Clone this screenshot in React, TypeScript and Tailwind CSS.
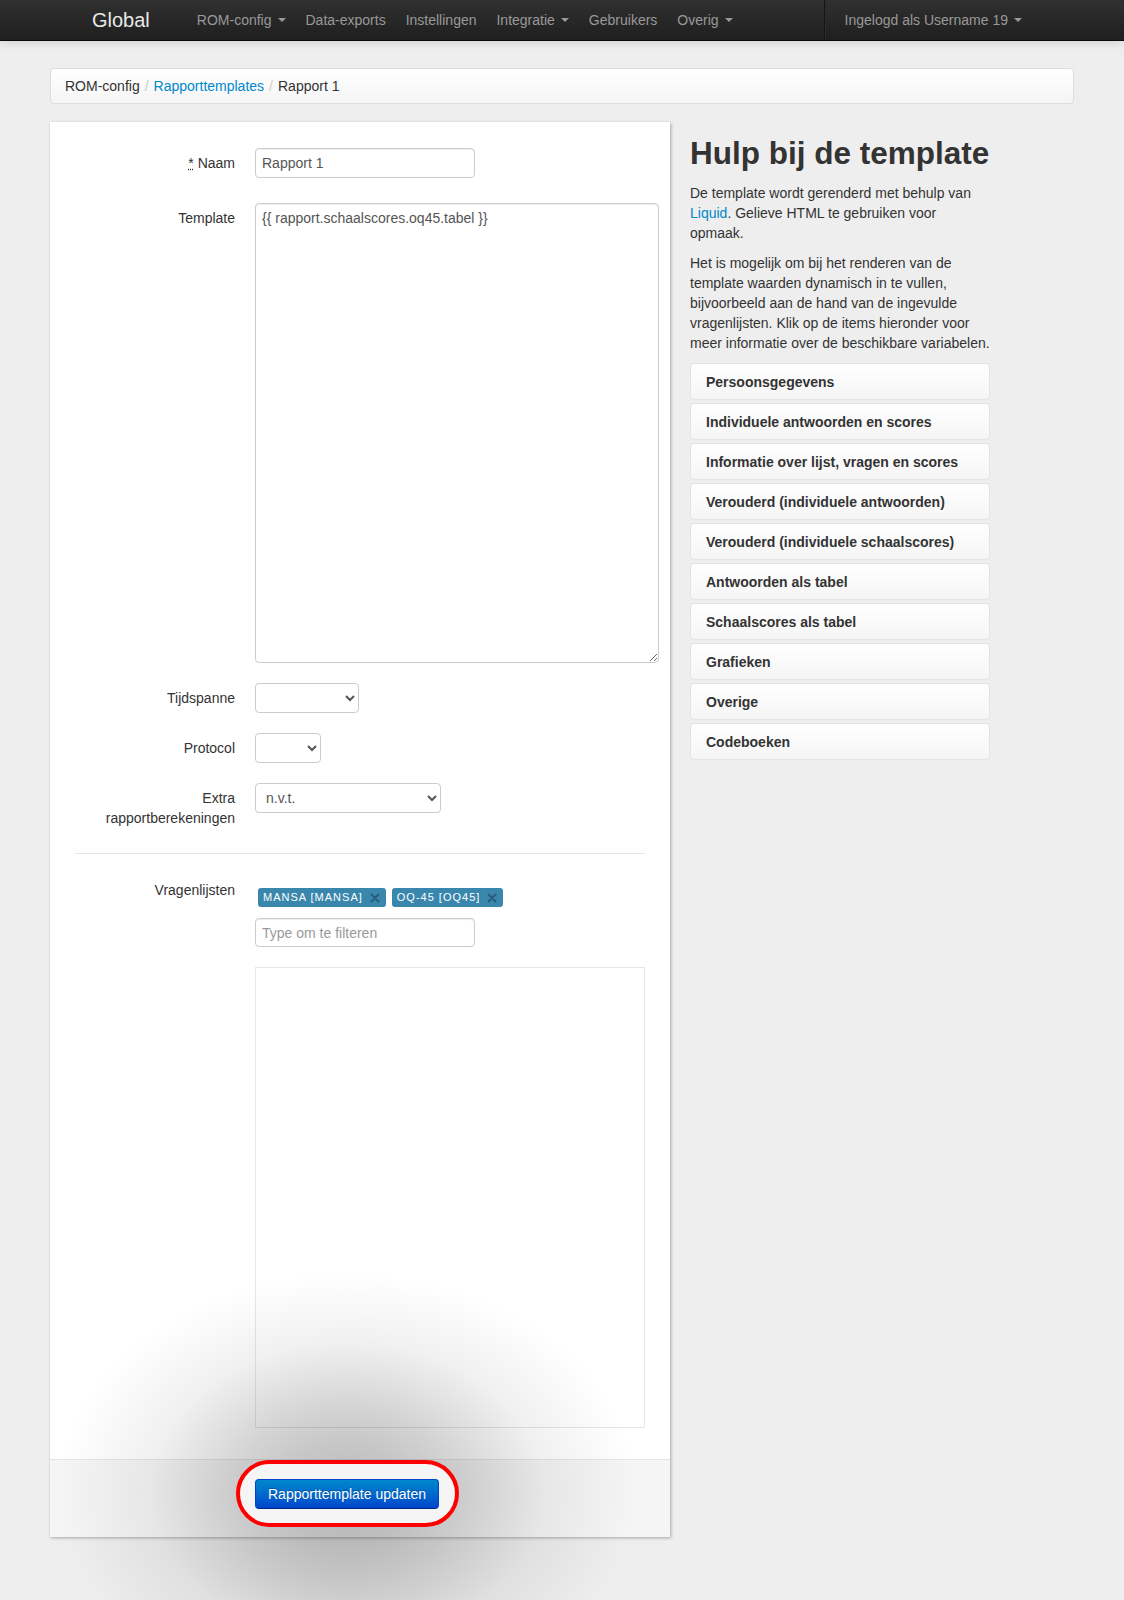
import React from "react";

const Caret = () => (
  <span className="inline-block ml-[6px] w-0 h-0 border-l-[4px] border-r-[4px] border-t-[4px] border-l-transparent border-r-transparent border-t-[#999999] align-middle mb-[2px]" />
);

const navItems: { label: string; caret?: boolean }[] = [
  { label: "ROM-config", caret: true },
  { label: "Data-exports" },
  { label: "Instellingen" },
  { label: "Integratie", caret: true },
  { label: "Gebruikers" },
  { label: "Overig", caret: true },
];

const helpItems = [
  "Persoonsgegevens",
  "Individuele antwoorden en scores",
  "Informatie over lijst, vragen en scores",
  "Verouderd (individuele antwoorden)",
  "Verouderd (individuele schaalscores)",
  "Antwoorden als tabel",
  "Schaalscores als tabel",
  "Grafieken",
  "Overige",
  "Codeboeken",
];

const Tag = ({ text }: { text: string }) => (
  <span className="inline-flex items-center h-[19px] pl-[5px] pr-[6px] rounded-[3px] bg-[#3a87ad] text-white text-[11px] tracking-[1px] leading-[19px]">
    {text}
    <svg className="ml-[7px]" width="10" height="10" viewBox="0 0 10 10">
      <path d="M1.5 1.5 L8.5 8.5 M8.5 1.5 L1.5 8.5" stroke="#285e7a" strokeWidth="2" strokeLinecap="round" />
    </svg>
  </span>
);

export default function App() {
  return (
    <div className="h-[1600px] overflow-hidden bg-[#eeeeee] text-[#333333] text-[14px] leading-[20px] font-['Liberation_Sans',Arial,sans-serif]">
      {/* Navbar */}
      <div className="h-[41px] bg-gradient-to-b from-[#303030] to-[#1f1f1f] border-b border-b-[#0a0a0a] shadow-[0_1px_10px_rgba(0,0,0,0.15)]">
        <div className="flex items-center h-[40px] px-[92px]">
          <span className="text-[20px] text-[#e8e8e8] leading-[20px]">Global</span>
          <div className="flex items-center ml-[37px]">
            {navItems.map((n) => (
              <span key={n.label} className="px-[10px] text-[#999999] whitespace-nowrap">
                {n.label}
                {n.caret && <Caret />}
              </span>
            ))}
          </div>
          <div className="flex items-center ml-auto h-[40px]">
            <div className="h-[40px] border-l border-l-[#151515] border-r border-r-[#2c2c2c] mx-[9px]" />
            <span className="px-[10px] text-[#999999] whitespace-nowrap">
              Ingelogd als Username 19
              <Caret />
            </span>
          </div>
        </div>
      </div>

      <div className="px-[50px]">
        {/* Breadcrumb */}
        <div className="mt-[27px] h-[36px] flex items-center pl-[14px] pr-[15px] border border-[#dddddd] rounded-[4px] bg-gradient-to-b from-white to-[#f5f5f5]">
          <span>ROM-config</span>
          <span className="px-[5px] text-[#cccccc]">/</span>
          <span className="text-[#0088cc]">Rapporttemplates</span>
          <span className="px-[5px] text-[#cccccc]">/</span>
          <span>Rapport 1</span>
        </div>

        <div className="flex items-start mt-[18px]">
          {/* Form panel */}
          <div className="w-[620px] shrink-0 bg-white shadow-[1px_1px_3px_rgba(0,0,0,0.3)]">
            <div className="px-[25px] pt-[26px] pb-[31px]">
              <div className="flex mb-[25px]">
                <label className="w-[160px] shrink-0 text-right pt-[5px]">
                  <abbr className="underline decoration-dotted" title="verplicht">*</abbr> Naam
                </label>
                <div className="ml-[20px]">
                  <input
                    className="block w-[220px] h-[30px] border border-[#cccccc] rounded-[4px] px-[6px] text-[#555555] shadow-[inset_0_1px_1px_rgba(0,0,0,0.075)]"
                    defaultValue="Rapport 1"
                  />
                </div>
              </div>

              <div className="flex mb-[20px]">
                <label className="w-[160px] shrink-0 text-right pt-[5px]">Template</label>
                <div className="ml-[20px]">
                  <textarea
                    className="block w-[404px] h-[460px] border border-[#cccccc] rounded-[4px] px-[6px] py-[4px] text-[#555555] shadow-[inset_0_1px_1px_rgba(0,0,0,0.075)]"
                    defaultValue="{{ rapport.schaalscores.oq45.tabel }}"
                  />
                </div>
              </div>

              <div className="flex mb-[20px]">
                <label className="w-[160px] shrink-0 text-right pt-[5px]">Tijdspanne</label>
                <div className="ml-[20px]">
                  <select className="block w-[104px] h-[30px] border border-[#cccccc] rounded-[4px] bg-white px-[6px] text-[#555555]">
                    <option></option>
                  </select>
                </div>
              </div>

              <div className="flex mb-[20px]">
                <label className="w-[160px] shrink-0 text-right pt-[5px]">Protocol</label>
                <div className="ml-[20px]">
                  <select className="block w-[66px] h-[30px] border border-[#cccccc] rounded-[4px] bg-white px-[6px] text-[#555555]">
                    <option></option>
                  </select>
                </div>
              </div>

              <div className="flex">
                <label className="w-[160px] shrink-0 text-right pt-[5px]">Extra rapportberekeningen</label>
                <div className="ml-[20px]">
                  <select className="block w-[186px] h-[30px] border border-[#cccccc] rounded-[4px] bg-white px-[6px] text-[#555555]">
                    <option>n.v.t.</option>
                  </select>
                </div>
              </div>

              <div className="mt-[25px] border-t border-t-[#e5e5e5] border-b border-b-white" />

              <div className="flex mt-[20px]">
                <label className="w-[160px] shrink-0 text-right pt-[5px]">Vragenlijsten</label>
                <div className="ml-[20px] pt-[13px]">
                  <div className="flex gap-[6px] pl-[3px]">
                    <Tag text="MANSA [MANSA]" />
                    <Tag text="OQ-45 [OQ45]" />
                  </div>
                  <input
                    className="block mt-[11px] w-[220px] h-[29px] border border-[#cccccc] rounded-[4px] px-[6px] text-[#555555] placeholder:text-[#999999] shadow-[inset_0_1px_1px_rgba(0,0,0,0.075)]"
                    placeholder="Type om te filteren"
                  />
                  <div className="mt-[20px] w-[390px] h-[461px] border border-[#e6e6e6] bg-white" />
                </div>
              </div>
            </div>

            {/* Form actions */}
            <div className="relative bg-[#f5f5f5] border-t border-t-[#e5e5e5] pt-[19px] pb-[28px] pl-[205px]">
              <div className="absolute left-[7px] top-[-187px] w-[580px] h-[440px] pointer-events-none bg-[radial-gradient(closest-side,rgba(0,0,0,0.27)_0%,rgba(0,0,0,0.22)_23%,rgba(0,0,0,0.17)_39%,rgba(0,0,0,0.06)_68%,rgba(0,0,0,0)_100%)]" />
              <div className="absolute left-[186px] top-0 w-[223px] h-[67px] rounded-full border-[4px] border-[#ff0000] bg-[#f5f5f5] pointer-events-none" />
              <button className="relative z-10 h-[30px] px-[12px] rounded-[4px] text-[14px] text-white bg-gradient-to-b from-[#0088cc] to-[#0044cc] border border-[#0044cc] border-b-[#002a80] [text-shadow:0_-1px_0_rgba(0,0,0,0.25)]">
                Rapporttemplate updaten
              </button>
            </div>
          </div>

          {/* Help column */}
          <div className="w-[300px] ml-[20px] shrink-0">
            <h1 className="mt-[11px] mb-[10px] text-[31.5px] leading-[40px] font-bold whitespace-nowrap">Hulp bij de template</h1>
            <p className="mb-[10px]">
              De template wordt gerenderd met behulp van <span className="text-[#0088cc]">Liquid</span>. Gelieve HTML te
              gebruiken voor opmaak.
            </p>
            <p className="mb-[10px]">
              Het is mogelijk om bij het renderen van de template waarden dynamisch in te vullen, bijvoorbeeld aan de
              hand van de ingevulde vragenlijsten. Klik op de items hieronder voor meer informatie over de beschikbare
              variabelen.
            </p>
            <div className="flex flex-col gap-[3px]">
              {helpItems.map((h) => (
                <div
                  key={h}
                  className="h-[37px] flex items-center px-[15px] border border-[#e3e3e3] rounded-[4px] bg-gradient-to-b from-white to-[#f5f5f5] font-bold"
                >
                  {h}
                </div>
              ))}
            </div>
          </div>
        </div>
      </div>
    </div>
  );
}
